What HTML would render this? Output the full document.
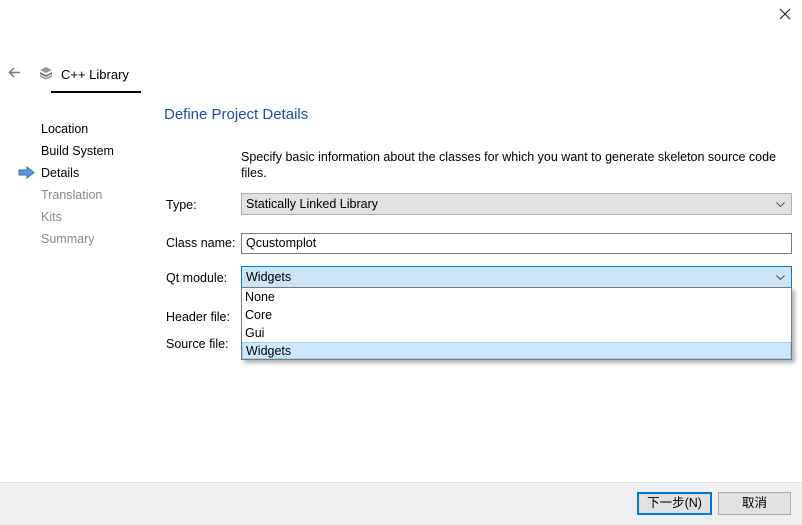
<!DOCTYPE html>
<html><head><meta charset="utf-8"><style>
*{margin:0;padding:0;box-sizing:border-box}
body{width:802px;height:525px;background:#fff;position:relative;overflow:hidden;font-family:"Liberation Sans","Noto Sans CJK SC",sans-serif;font-size:12.5px;color:#000}
.a{position:absolute;white-space:nowrap}
.g{color:#8a8a8a}
.box{position:absolute;border:1px solid #adadad;height:22px;padding:3px 0 0 4px}
.chev{position:absolute;right:6px;top:8px}
.btn{display:flex;align-items:center;justify-content:center;line-height:1}
</style></head><body>
<svg class="a" style="left:779px;top:8px" width="12" height="12" viewBox="0 0 12 12"><path d="M1 1L11 11M11 1L1 11" stroke="#222" stroke-width="1.2"/></svg>
<svg class="a" style="left:8px;top:67px" width="13" height="11" viewBox="0 0 13 11"><path d="M12 5.5H2M6 1L1.5 5.5L6 10" stroke="#777" stroke-width="1.5" fill="none"/></svg>
<svg class="a" style="left:39px;top:66px" width="14" height="14" viewBox="0 0 14 14"><path d="M7 1L13 4L7 7L1 4Z" fill="#999"/><path d="M1 6L7 9L13 6V8L7 11L1 8Z" fill="#777"/><path d="M1 9L7 12L13 9V10.5L7 13.5L1 10.5Z" fill="#888"/></svg>
<div class="a" style="left:61px;top:67px;font-size:13px">C++ Library</div>
<div class="a" style="left:51px;top:91px;width:90px;height:2px;background:#000"></div>
<div class="a" style="left:164px;top:106px;font-size:15px;color:#1c4ea8">Define Project Details</div>
<div class="a" style="left:41px;top:122px">Location</div>
<div class="a" style="left:41px;top:144px">Build System</div>
<svg class="a" style="left:18px;top:166px" width="17" height="13" viewBox="0 0 17 13"><path d="M1 4H9V1L16 6.5L9 12V9H1Z" fill="#5a9ae0" stroke="#3a6fb0" stroke-width="1"/></svg>
<div class="a" style="left:41px;top:166px">Details</div>
<div class="a g" style="left:41px;top:188px">Translation</div>
<div class="a g" style="left:41px;top:210px">Kits</div>
<div class="a g" style="left:41px;top:232px">Summary</div>
<div class="a" style="left:241px;top:149px;line-height:16px;white-space:normal;width:550px">Specify basic information about the classes for which you want to generate skeleton source code files.</div>
<div class="a" style="left:166px;top:198px">Type:</div>
<div class="box" style="left:241px;top:193px;width:551px;background:#e1e1e1">Statically Linked Library<svg class="chev" width="9" height="5" viewBox="0 0 9 5"><path d="M0.5 0.5L4.5 4.5L8.5 0.5" stroke="#555" fill="none"/></svg></div>
<div class="a" style="left:166px;top:236px">Class name:</div>
<div class="box" style="left:241px;top:233px;width:551px;height:21px;background:#fff;border-color:#7a7a7a;padding-top:2px">Qcustomplot</div>
<div class="a" style="left:166px;top:271px">Qt module:</div>
<div class="box" style="left:241px;top:266px;width:551px;background:#cce4f7;border-color:#0078d7">Widgets<svg class="chev" width="9" height="5" viewBox="0 0 9 5"><path d="M0.5 0.5L4.5 4.5L8.5 0.5" stroke="#555" fill="none"/></svg></div>
<div class="a" style="left:166px;top:310px">Header file:</div>
<div class="a" style="left:166px;top:337px">Source file:</div>
<div class="a" style="left:241px;top:287px;width:551px;height:73px;background:#fff;border:1px solid #7a7a7a;box-shadow:3px 3px 4px rgba(0,0,0,.3)">
<div style="position:absolute;left:3px;top:2px">None</div>
<div style="position:absolute;left:3px;top:20px">Core</div>
<div style="position:absolute;left:3px;top:38px">Gui</div>
<div style="position:absolute;left:0;top:54px;width:549px;height:17px;background:#cce8ff;border:1px solid #99d1ff;padding:1px 0 0 3px">Widgets</div>
</div>
<div class="a" style="left:0;top:482px;width:802px;height:43px;background:#f0f0f0;border-top:1px solid #dfdfdf"></div>
<div class="a btn" style="left:637px;top:492px;width:75px;height:23px;background:#e1e1e1;border:2px solid #0078d7">下一步(N)</div>
<div class="a btn" style="left:718px;top:492px;width:73px;height:23px;background:#e1e1e1;border:1px solid #adadad">取消</div>
</body></html>
